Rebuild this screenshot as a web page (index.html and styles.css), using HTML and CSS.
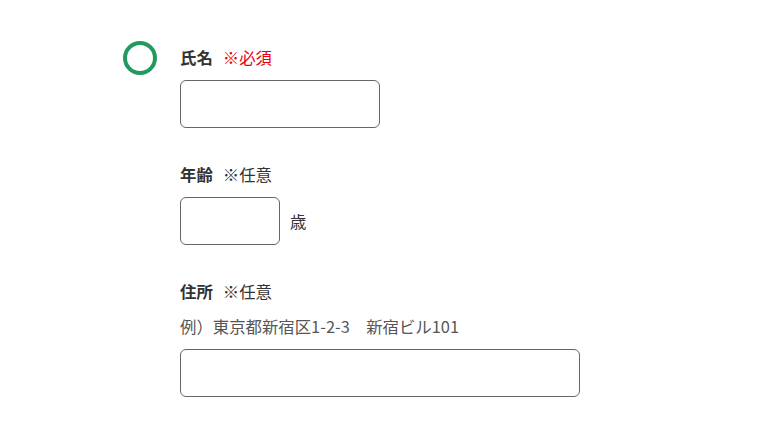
FILE: index.html
```html
<!DOCTYPE html>
<html lang="ja">
<head>
    <meta charset="UTF-8">
    <meta name="viewport" content="width=device-width, initial-scale=1.0">
    <title>フォーム</title>
    <link rel="stylesheet" href="styles.css">
</head>
<body>
    <div class="container">
        <span class="marker"></span>
        <form class="form">
            <div class="field">
                <label class="label" for="name">氏名<span class="required">※必須</span></label>
                <input class="input input-name" type="text" id="name">
            </div>
            <div class="field">
                <label class="label" for="age">年齢<span class="optional">※任意</span></label>
                <div class="row">
                    <input class="input input-age" type="text" id="age">
                    <span class="unit">歳</span>
                </div>
            </div>
            <div class="field">
                <label class="label" for="address">住所<span class="optional">※任意</span></label>
                <p class="hint">例）東京都新宿区1-2-3　新宿ビル101</p>
                <input class="input input-address" type="text" id="address">
            </div>
        </form>
    </div>
</body>
</html>
```

FILE: styles.css
```css
body {
    font-family: "Noto Sans CJK JP", "Noto Sans", sans-serif;
    margin: 0;
    padding: 0;
    background-color: #ffffff;
    color: #333333;
}

.container {
    display: flex;
    gap: 23px;
    padding: 41px 0 0 123px;
}

.marker {
    flex: none;
    width: 26px;
    height: 26px;
    border: 4px solid #22995f;
    border-radius: 50%;
}

.form {
    display: flex;
    flex-direction: column;
    gap: 34px;
    padding-top: 4px;
}

.field {
    display: flex;
    flex-direction: column;
    align-items: flex-start;
}

.label {
    font-size: 16.4px;
    line-height: 24px;
    font-weight: bold;
    margin-bottom: 11px;
}

.required,
.optional {
    font-weight: normal;
    margin-left: 10px;
}

.required {
    color: #e60012;
}

.hint {
    margin: 0 0 11px;
    font-size: 16.4px;
    line-height: 24px;
    color: #555555;
}

.row {
    display: flex;
    align-items: center;
    gap: 10px;
}

.unit {
    font-size: 16.4px;
    color: #333333;
}

.input {
    box-sizing: border-box;
    height: 48px;
    margin: 0;
    padding: 0 12px;
    border: 1px solid #666666;
    border-radius: 6px;
    font-size: 16px;
    font-family: inherit;
    background-color: #ffffff;
}

.input-name {
    width: 200px;
}

.input-age {
    width: 100px;
}

.input-address {
    width: 400px;
}
```
